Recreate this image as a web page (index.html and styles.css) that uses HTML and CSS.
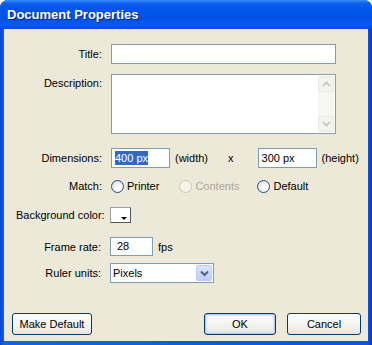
FILE: index.html
```html
<!DOCTYPE html>
<html lang="en">
<head>
    <meta charset="UTF-8">
    <meta name="viewport" content="width=device-width, initial-scale=1.0">
    <title>Document Properties</title>
    <link rel="stylesheet" href="styles.css">
</head>
<body>
    <div class="window">
        <div class="titlebar">Document Properties</div>
        <div class="client">
            <div class="row row-title">
                <label class="label">Title:</label>
                <div class="field wide"></div>
            </div>
            <div class="row row-desc">
                <label class="label">Description:</label>
                <div class="field area">
                    <div class="scroll">
                        <span class="sbtn">
                            <svg width="9" height="6" viewBox="0 0 9 6"><path d="M1 5 L4.5 1.5 L8 5" fill="none" stroke="#c3c3bd" stroke-width="1.6"/></svg>
                        </span>
                        <span class="strack"></span>
                        <span class="sbtn">
                            <svg width="9" height="6" viewBox="0 0 9 6"><path d="M1 1 L4.5 4.5 L8 1" fill="none" stroke="#c3c3bd" stroke-width="1.6"/></svg>
                        </span>
                    </div>
                </div>
            </div>
            <div class="row row-dim">
                <label class="label">Dimensions:</label>
                <div class="field dim"><span class="sel">400 px</span></div>
                <span class="unit">(width)</span>
                <span class="times">x</span>
                <div class="field dim">300 px</div>
                <span class="unit">(height)</span>
            </div>
            <div class="row row-match">
                <label class="label">Match:</label>
                <span class="radio"></span><span class="rtext">Printer</span>
                <span class="radio off"></span><span class="rtext off">Contents</span>
                <span class="radio"></span><span class="rtext">Default</span>
            </div>
            <div class="row row-bg">
                <label class="label">Background color:</label>
                <div class="swatch"><span class="tri"></span></div>
            </div>
            <div class="row row-fps">
                <label class="label">Frame rate:</label>
                <div class="field fps">28</div>
                <span class="unit fpsu">fps</span>
            </div>
            <div class="row row-ruler">
                <label class="label">Ruler units:</label>
                <div class="field select">
                    <span class="val">Pixels</span>
                    <span class="drop">
                        <svg width="9" height="7" viewBox="0 0 9 7"><path d="M1 1.5 L4.5 5 L8 1.5" fill="none" stroke="#4d6185" stroke-width="2"/></svg>
                    </span>
                </div>
            </div>
            <div class="buttons">
                <button class="btn make">Make Default</button>
                <div class="spacer"></div>
                <button class="btn ok">OK</button>
                <button class="btn cancel">Cancel</button>
            </div>
        </div>
    </div>
</body>
</html>
```

FILE: styles.css
```css
body {
    margin: 0;
    background: #fff;
    font-family: "Liberation Sans", Arial, sans-serif;
    font-size: 11px;
    color: #000;
}

.window {
    width: 372px;
    height: 345px;
    box-sizing: border-box;
    border-radius: 8px 8px 0 0;
    padding: 0 4px 4px 4px;
    display: flex;
    flex-direction: column;
    background: linear-gradient(to right, #0842d6 0, #1760ee 4px, #0b52e5 368px, #0634c4 372px);
}

.titlebar {
    height: 29px;
    margin: 0 -4px;
    padding-left: 7px;
    border-radius: 8px 8px 0 0;
    background: linear-gradient(to bottom, #3d8ffb 0, #0f62f0 3px, #0455ea 8px, #0051e6 18px, #0a5aef 25px, #0649d8 29px);
    color: #fff;
    font-weight: bold;
    font-size: 13px;
    line-height: 29px;
    text-shadow: 1px 1px 0 #0a1e80;
}

.client {
    flex: 1;
    background: #ece9d8;
    padding: 15px 0 0 12px;
    display: flex;
    flex-direction: column;
}

.row {
    display: flex;
    align-items: center;
}

.label {
    width: 95px;
    padding-right: 9px;
    box-sizing: border-box;
    text-align: right;
    flex-shrink: 0;
    white-space: nowrap;
}

.field {
    background: #fff;
    border: 1px solid #7f9db9;
    box-sizing: border-box;
    height: 20px;
    line-height: 18px;
    padding: 0 3px;
}

.wide {
    width: 225px;
}

.row-desc {
    margin-top: 10px;
    align-items: flex-start;
}

.row-desc .label {
    padding-top: 3px;
}

.area {
    width: 225px;
    height: 60px;
    padding: 1px;
    display: flex;
    justify-content: flex-end;
}

.scroll {
    width: 16px;
    display: flex;
    flex-direction: column;
    background: #f7f7f2;
}

.sbtn {
    height: 16px;
    box-sizing: border-box;
    border: 1px solid #e8e8e2;
    border-radius: 2px;
    background: #f4f4ee;
    display: flex;
    align-items: center;
    justify-content: center;
}

.strack {
    flex: 1;
}

.row-dim {
    margin-top: 14px;
}

.dim {
    width: 59px;
    padding-left: 3px;
}

.sel {
    background: #316ac5;
    color: #fff;
    padding: 1px 0;
}

.unit {
    margin-left: 5px;
}

.times {
    margin: 0 24px 0 20px;
}

.row-match {
    margin-top: 9px;
    height: 18px;
}

.radio {
    width: 13px;
    height: 13px;
    box-sizing: border-box;
    border: 1px solid #1c5180;
    border-radius: 50%;
    background: radial-gradient(circle at 65% 65%, #fff 0, #f4f4f0 40%, #d6d3c8 100%);
}

.radio.off {
    border-color: #cac8bb;
    background: #f5f4ea;
    margin-left: 2px;
}

.rtext {
    margin-left: 3px;
    margin-right: 18px;
}

.rtext.off {
    color: #aca899;
    margin-right: 18px;
}

.row-bg {
    margin-top: 11px;
    height: 18px;
}

.row-bg .label,
.row-fps .label,
.row-ruler .label {
    width: 94px;
}

.swatch {
    width: 21px;
    height: 16px;
    box-sizing: border-box;
    border: 1px solid #a0a0a0;
    border-right-color: #555;
    border-bottom-color: #555;
    background: #fff;
    position: relative;
}

.tri {
    position: absolute;
    right: 3px;
    bottom: 2px;
    border-left: 3px solid transparent;
    border-right: 3px solid transparent;
    border-top: 3px solid #000;
}

.row-fps {
    margin-top: 13px;
}

.fps {
    width: 43px;
    height: 19px;
    line-height: 17px;
    padding-left: 6px;
}

.fpsu {
    margin-left: 5px;
}

.row-ruler {
    margin-top: 7px;
}

.select {
    width: 104px;
    display: flex;
    padding: 1px;
}

.val {
    flex: 1;
    padding-left: 1px;
    line-height: 17px;
}

.drop {
    width: 16px;
    height: 16px;
    border-radius: 2px;
    background: linear-gradient(to bottom, #dbe5fd, #bccdf9);
    border: 1px solid #b9ccf7;
    box-sizing: border-box;
    display: flex;
    align-items: center;
    justify-content: center;
}

.buttons {
    display: flex;
    margin: 30px 0 0 -4px;
    padding-right: 7px;
}

.spacer {
    flex: 1;
}

.btn {
    font-family: "Liberation Sans", Arial, sans-serif;
    font-size: 11px;
    height: 22px;
    border: 1px solid #003c74;
    border-radius: 3px;
    background: linear-gradient(to bottom, #fff 0, #f5f5f1 50%, #e6e5dd 100%);
    padding: 0;
    color: #000;
}

.make {
    width: 80px;
}

.ok {
    width: 72px;
    margin-right: 11px;
    box-shadow: inset 0 0 0 1px #b4cdf5, inset 0 0 0 2px #d5e2f8;
}

.cancel {
    width: 74px;
}
```
